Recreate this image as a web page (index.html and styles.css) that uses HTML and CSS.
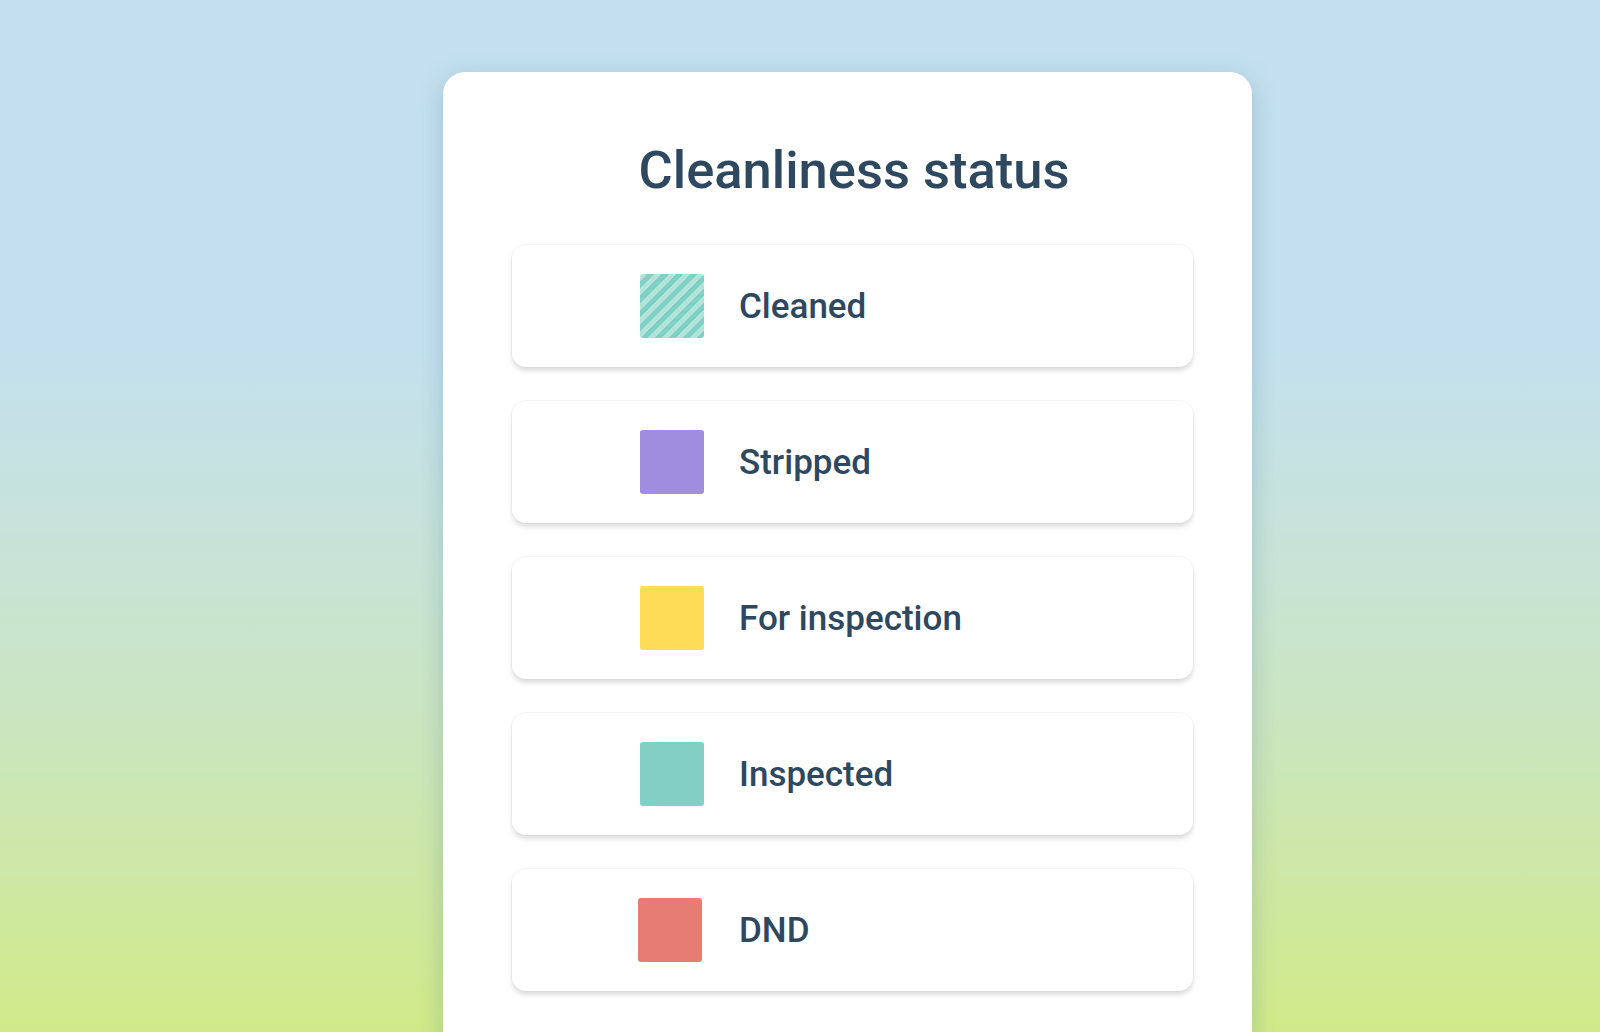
FILE: index.html
```html
<!DOCTYPE html>
<html lang="en">
<head>
<meta charset="utf-8">
<title>Cleanliness status</title>
<link rel="stylesheet" href="styles.css">
</head>
<body>
  <main class="stage">
    <section class="legend-card">
      <h1 class="legend-title">Cleanliness status</h1>
      <ul class="legend-list">
        <li class="legend-row">
          <span class="swatch swatch-cleaned"></span>
          <span class="legend-label">Cleaned</span>
        </li>
        <li class="legend-row">
          <span class="swatch swatch-stripped"></span>
          <span class="legend-label">Stripped</span>
        </li>
        <li class="legend-row">
          <span class="swatch swatch-inspection"></span>
          <span class="legend-label">For inspection</span>
        </li>
        <li class="legend-row">
          <span class="swatch swatch-inspected"></span>
          <span class="legend-label">Inspected</span>
        </li>
        <li class="legend-row">
          <span class="swatch swatch-dnd"></span>
          <span class="legend-label">DND</span>
        </li>
      </ul>
    </section>
  </main>
</body>
</html>
```

FILE: styles.css
```css
* {
  box-sizing: border-box;
}

html,
body {
  margin: 0;
  height: 100%;
}

body {
  font-family: Roboto, "Liberation Sans", sans-serif;
  color: #2e4860;
  background: linear-gradient(
    to bottom,
    #c4e0ee 0%,
    #c4e0ee 34%,
    #c8e4d6 55%,
    #cbe6bc 72%,
    #d1ea88 100%
  );
  overflow: hidden;
}

.stage {
  height: 100%;
  display: flex;
  justify-content: flex-start;
  padding: 72px 0 0 443px;
}

.legend-card {
  width: 809px;
  height: 1100px;
  background: #ffffff;
  border-radius: 22px;
  box-shadow: 0 6px 26px rgba(70, 110, 140, 0.28);
  padding: 67px 59px 0 69px;
}

.legend-title {
  margin: 0 0 44px;
  text-align: center;
  font-size: 52.5px;
  font-weight: 500;
  line-height: 62px;
  letter-spacing: 0;
  color: #2e4860;
  padding-left: 3px;
}

.legend-list {
  list-style: none;
  margin: 0;
  padding: 0;
  display: flex;
  flex-direction: column;
  gap: 34px;
}

.legend-row {
  height: 122px;
  display: flex;
  align-items: center;
  gap: 35px;
  padding-left: 128px;
  background: #ffffff;
  border-radius: 14px;
  box-shadow: 0 0 0 1px rgba(0, 0, 0, 0.03), 0 4px 5px rgba(0, 0, 0, 0.13);
}

.swatch {
  width: 64px;
  height: 64px;
  border-radius: 3px;
  flex: none;
}

.swatch-cleaned {
  background: repeating-linear-gradient(
    -45deg,
    #7fd1c4 0,
    #7fd1c4 5px,
    #b3e4dc 5px,
    #b3e4dc 10px
  );
}

.swatch-stripped {
  background: #a18de0;
}

.swatch-inspection {
  background: #ffdc58;
}

.swatch-inspected {
  background: #82d0c5;
}

.swatch-dnd {
  background: #e67c72;
  margin-left: -2px;
  margin-right: 2px;
}

.legend-label {
  font-size: 35px;
  font-weight: 500;
  color: #2e4860;
}
```
